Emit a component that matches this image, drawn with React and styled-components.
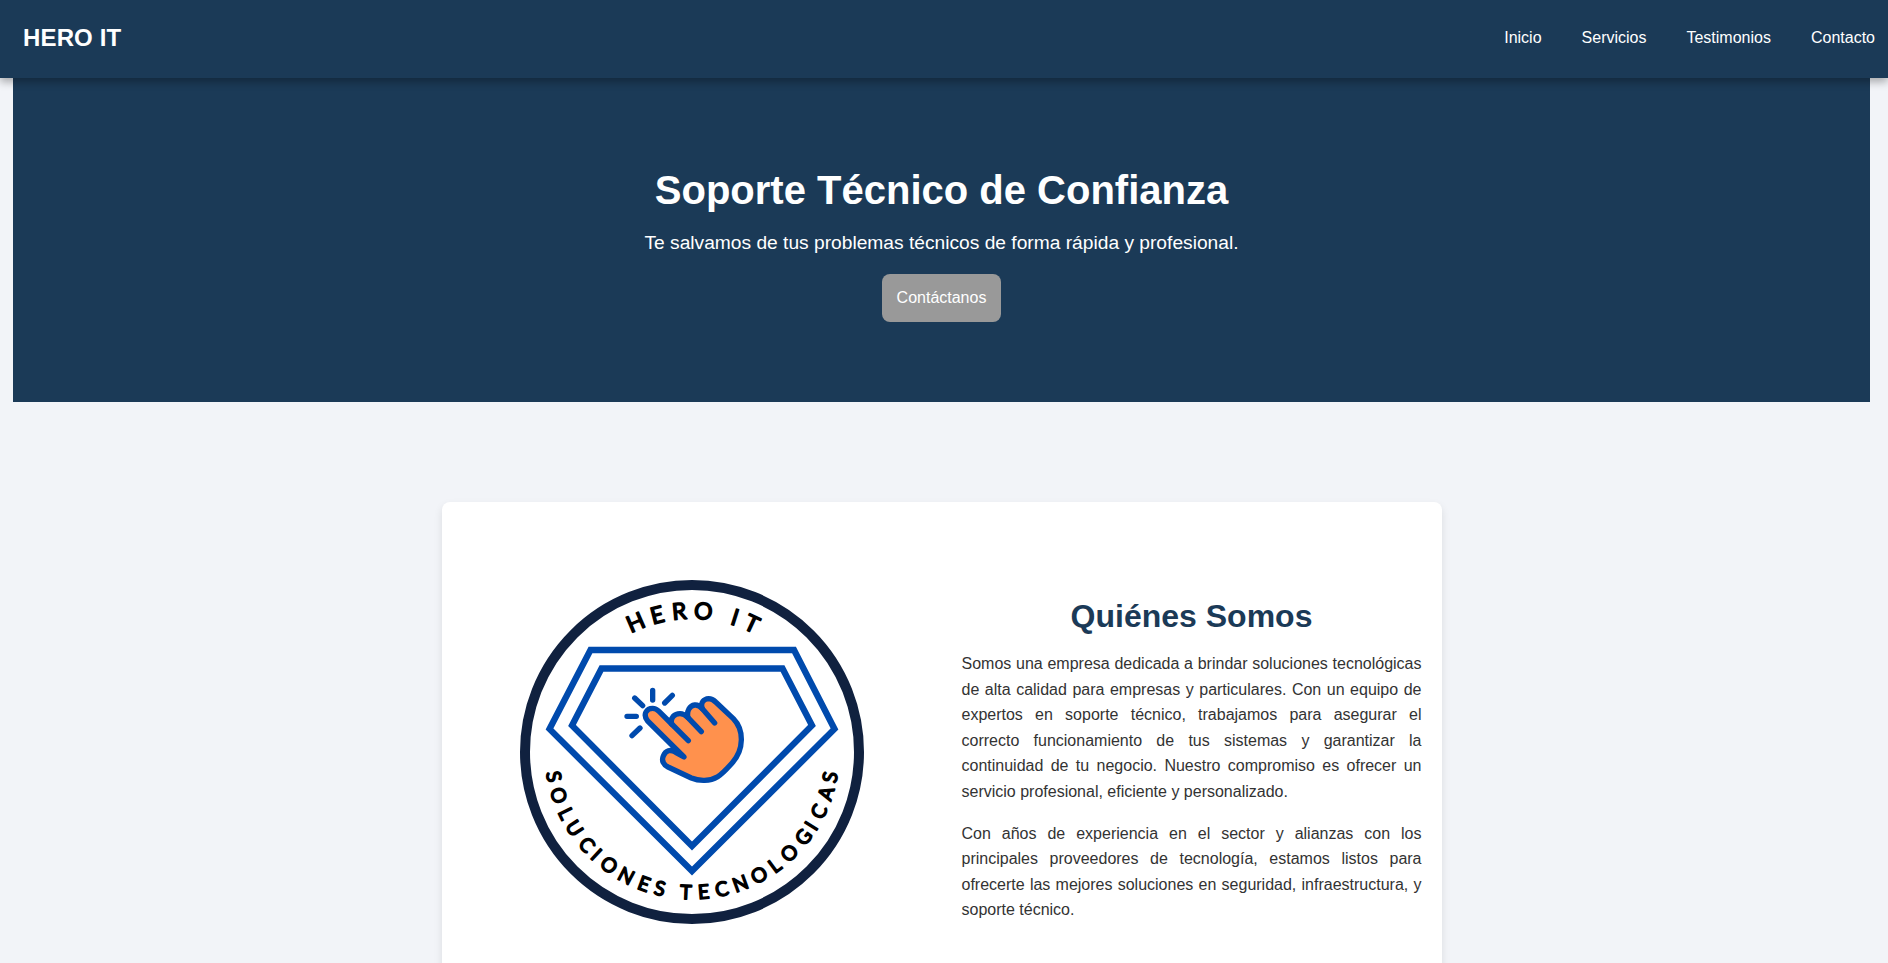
import React from "react";
import styled, { createGlobalStyle } from "styled-components";

const NAVY = "#1b3a57";

const GlobalStyle = createGlobalStyle`
  * { box-sizing: border-box; }
  html, body { margin: 0; padding: 0; }
  body {
    height: 963px;
    overflow: hidden;
    background: #f2f4f8;
    color: #333;
    font-family: Arial, "Liberation Sans", sans-serif;
    font-size: 16px;
    line-height: 1.6;
  }
  h1, h2, p { margin: 0; }
`;

const Header = styled.header`
  position: relative;
  z-index: 1;
  display: flex;
  justify-content: space-between;
  align-items: center;
  height: 78px;
  padding: 0 13px 3px 23px;
  background: ${NAVY};
  box-shadow: 0 4px 8px rgba(0, 0, 0, 0.3);
`;

const Brand = styled.div`
  padding-top: 2px;
  color: #fff;
  font-size: 24px;
  font-weight: bold;
  letter-spacing: 0.15px;
`;

const Nav = styled.nav`
  display: flex;
  gap: 40px;
`;

const NavLink = styled.a`
  color: #fff;
  text-decoration: none;
`;

const Main = styled.main`
  padding: 0 18px 0 13px;
`;

const Hero = styled.section`
  display: flex;
  flex-direction: column;
  align-items: center;
  height: 324px;
  padding-top: 80px;
  background: ${NAVY};
  color: #fff;
`;

const HeroTitle = styled.h1`
  font-size: 40px;
`;

const HeroText = styled.p`
  margin: 6px 0 15px;
  font-size: 19.2px;
`;

const Button = styled.a`
  height: 48px;
  padding: 11px 15px;
  border-radius: 8px;
  background: #999;
  color: #fff;
  text-decoration: none;
`;

const Card = styled.section`
  display: grid;
  grid-template-columns: 460px 460px;
  gap: 40px;
  width: 1000px;
  height: 500px;
  margin: 100px 0 0 428.5px;
  padding: 20px;
  border-radius: 8px;
  background: #fff;
  box-shadow: 0 4px 8px rgba(0, 0, 0, 0.1);
`;

const About = styled.div`
  padding-top: 69px;
`;

const AboutTitle = styled.h2`
  margin-bottom: 8.8px;
  color: ${NAVY};
  font-size: 32px;
  text-align: center;
`;

const Paragraph = styled.p`
  margin-bottom: 16px;
  text-align: justify;
`;

const Emblem = styled.svg`
  display: block;
  width: 460px;
  height: 460px;
`;

const Lettering = styled.text`
  font-family: Lato, sans-serif;
  font-weight: 400;
  font-size: ${(p) => p.$size}px;
  fill: #000;
  stroke: #000;
  stroke-width: 1.5px;
  stroke-linejoin: round;
  white-space: pre;
`;

// Sets one string around a circle; each glyph is centred on its own angle,
// measured clockwise from the top (or counter-clockwise from the bottom).
function ArcText({ text, angles, radius, size, bottom }) {
  const ctx = document.createElement("canvas").getContext("2d");
  ctx.font = `400 ${size}px Lato`;
  const xs = [];
  const ys = [];
  const rot = [];
  [...text].forEach((ch, i) => {
    const a = (angles[i] * Math.PI) / 180;
    const half = ctx.measureText(ch).width / 2;
    const dir = bottom ? 1 : -1;
    const turn = bottom ? -a : a;
    xs.push((radius * Math.sin(a) - half * Math.cos(turn)).toFixed(2));
    ys.push((dir * radius * Math.cos(a) - half * Math.sin(turn)).toFixed(2));
    rot.push(((turn * 180) / Math.PI).toFixed(2));
  });
  return (
    <Lettering $size={size} x={xs.join(" ")} y={ys.join(" ")} rotate={rot.join(" ")}>
      {text}
    </Lettering>
  );
}

const TOP_ANGLES = [-23.5, -14.3, -5.2, 4.6, 11, 17.7, 25];
const BOTTOM_ANGLES = [
  -79.9, -72, -64, -57, -48.6, -43, -36.3, -28, -20, -13.3, -8,
  -2.5, 4.8, 12.2, 20.2, 28.6, 36.1, 44, 52.7, 58.2, 64.9, 72.9, 79.6,
];

function Logo() {
  return (
    <Emblem viewBox="-230 -230 460 460" role="img">
      <circle r="167" fill="#fff" stroke="#10213f" strokeWidth="10" />
      <ArcText text="HERO IT" angles={TOP_ANGLES} radius={133.3} size={23} />
      <ArcText text="SOLUCIONES TECNOLOGICAS" angles={BOTTOM_ANGLES} radius={147.3} size={19.8} bottom />
      <g fill="none" stroke="#004aad" strokeWidth="6.3">
        <path d="M-101.5-102H102L142.5-23L0 119L-142.5-23Z" />
        <path d="M-90.5-83.5H90.5L120-26.5L0 94L-120-26.5Z" />
      </g>
      <g
        transform="translate(-72 -72) scale(0.33333)"
        stroke="#004aad"
        strokeWidth="16"
        strokeLinecap="round"
        strokeLinejoin="round"
      >
        <path
          fill="#ff914d"
          d="M192 231L83 123C67 103 80 85 98 85C106 85 112 89 117 94L155 132C150 112 164 101 180 101C190 101 197 106 204 113C199 91 210 77 224 75C234 74 241 79 247 86C240 67 252 57 266 56C275 56 281 60 287 66L340 116C373 150 372 209 337 248C318 269 309 280 293 290C270 304 238 304 214 294L144 261C130 254 124 242 130 228C137 211 151 207 167 217Z"
        />
        <path fill="none" d="M155 132L205 182M204 113L244 155M247 86L284 129" />
        <path fill="none" d="M98 31V60M44 54L68 77M21 109H49M36 167L60 144M134 69L157 46" />
      </g>
    </Emblem>
  );
}

export default function App() {
  return (
    <>
      <GlobalStyle />
      <Header>
        <Brand>HERO IT</Brand>
        <Nav>
          {["Inicio", "Servicios", "Testimonios", "Contacto"].map((item) => (
            <NavLink key={item}>{item}</NavLink>
          ))}
        </Nav>
      </Header>
      <Main>
        <Hero>
          <HeroTitle>Soporte Técnico de Confianza</HeroTitle>
          <HeroText>Te salvamos de tus problemas técnicos de forma rápida y profesional.</HeroText>
          <Button>Contáctanos</Button>
        </Hero>
        <Card>
          <Logo />
          <About>
            <AboutTitle>Quiénes Somos</AboutTitle>
            <Paragraph>
              Somos una empresa dedicada a brindar soluciones tecnológicas de alta calidad para
              empresas y particulares. Con un equipo de expertos en soporte técnico, trabajamos para
              asegurar el correcto funcionamiento de tus sistemas y garantizar la continuidad de tu
              negocio. Nuestro compromiso es ofrecer un servicio profesional, eficiente y
              personalizado.
            </Paragraph>
            <Paragraph>
              Con años de experiencia en el sector y alianzas con los principales proveedores de
              tecnología, estamos listos para ofrecerte las mejores soluciones en seguridad,
              infraestructura, y soporte técnico.
            </Paragraph>
          </About>
        </Card>
      </Main>
    </>
  );
}
